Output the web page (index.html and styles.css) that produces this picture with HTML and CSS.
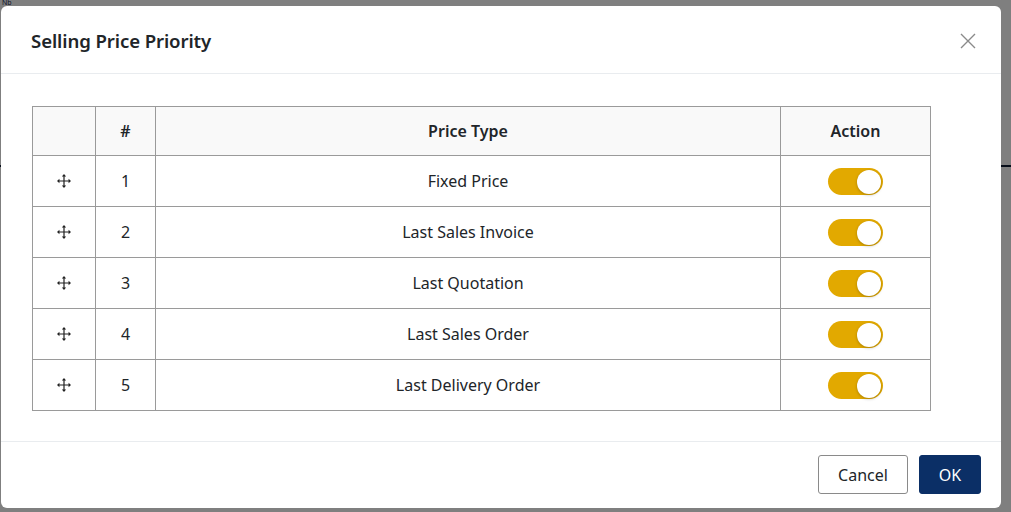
FILE: index.html
```html
<!DOCTYPE html>
<html lang="en">
<head>
<meta charset="utf-8">
<title>Selling Price Priority</title>
<link rel="stylesheet" href="styles.css">
</head>
<body>
<div class="page">
  <div class="page-title">Nb</div>
  <div class="page-rule"></div>
</div>
<div class="overlay">
  <div class="modal">
    <div class="modal-header">
      <h2 class="modal-title">Selling Price Priority</h2>
      <button class="close" aria-label="Close">
        <svg width="16" height="16" viewBox="0 0 16 16"><path d="M1 1 L15 15 M15 1 L1 15" stroke="#8a8a8a" stroke-width="1.4" fill="none"/></svg>
      </button>
    </div>
    <div class="modal-body">
      <table class="grid">
        <colgroup>
          <col class="c-drag"><col class="c-num"><col class="c-type"><col class="c-act">
        </colgroup>
        <thead>
          <tr><th></th><th>#</th><th>Price Type</th><th>Action</th></tr>
        </thead>
        <tbody>
          <tr><td><svg class="move" viewBox="0 0 15 15"><path d="M7.5 1.5v12M1.5 7.5h12" stroke="#222" stroke-width="1.3"/><path d="M7.5 0l-2.3 2.6h4.6zM7.5 15l-2.3-2.6h4.6zM0 7.5l2.6-2.3v4.6zM15 7.5l-2.6-2.3v4.6z" fill="#222"/></svg></td><td>1</td><td>Fixed Price</td><td><span class="toggle"><span class="knob"></span></span></td></tr>
          <tr><td><svg class="move" viewBox="0 0 15 15"><path d="M7.5 1.5v12M1.5 7.5h12" stroke="#222" stroke-width="1.3"/><path d="M7.5 0l-2.3 2.6h4.6zM7.5 15l-2.3-2.6h4.6zM0 7.5l2.6-2.3v4.6zM15 7.5l-2.6-2.3v4.6z" fill="#222"/></svg></td><td>2</td><td>Last Sales Invoice</td><td><span class="toggle"><span class="knob"></span></span></td></tr>
          <tr><td><svg class="move" viewBox="0 0 15 15"><path d="M7.5 1.5v12M1.5 7.5h12" stroke="#222" stroke-width="1.3"/><path d="M7.5 0l-2.3 2.6h4.6zM7.5 15l-2.3-2.6h4.6zM0 7.5l2.6-2.3v4.6zM15 7.5l-2.6-2.3v4.6z" fill="#222"/></svg></td><td>3</td><td>Last Quotation</td><td><span class="toggle"><span class="knob"></span></span></td></tr>
          <tr><td><svg class="move" viewBox="0 0 15 15"><path d="M7.5 1.5v12M1.5 7.5h12" stroke="#222" stroke-width="1.3"/><path d="M7.5 0l-2.3 2.6h4.6zM7.5 15l-2.3-2.6h4.6zM0 7.5l2.6-2.3v4.6zM15 7.5l-2.6-2.3v4.6z" fill="#222"/></svg></td><td>4</td><td>Last Sales Order</td><td><span class="toggle"><span class="knob"></span></span></td></tr>
          <tr><td><svg class="move" viewBox="0 0 15 15"><path d="M7.5 1.5v12M1.5 7.5h12" stroke="#222" stroke-width="1.3"/><path d="M7.5 0l-2.3 2.6h4.6zM7.5 15l-2.3-2.6h4.6zM0 7.5l2.6-2.3v4.6zM15 7.5l-2.6-2.3v4.6z" fill="#222"/></svg></td><td>5</td><td>Last Delivery Order</td><td><span class="toggle"><span class="knob"></span></span></td></tr>
        </tbody>
      </table>
    </div>
    <div class="modal-footer">
      <button class="btn btn-cancel">Cancel</button>
      <button class="btn btn-ok">OK</button>
    </div>
  </div>
</div>
</body>
</html>
```

FILE: styles.css
```css
html, body {
  margin: 0;
  padding: 0;
  height: 100%;
  overflow: hidden;
}
body {
  font-family: "Noto Sans", "Open Sans", "Liberation Sans", sans-serif;
  color: #212529;
  background: #fff;
}
.page {
  height: 100%;
}
.page-title {
  font-size: 7px;
  line-height: 6px;
  height: 6px;
  padding-left: 2px;
  color: #1a2a50;
}
.page-rule {
  margin-top: 159px;
  height: 2px;
  background: #0c1a33;
}
.overlay {
  position: absolute;
  inset: 0;
  background: rgba(0, 0, 0, 0.5);
}
.modal {
  margin: 6px 0 0 1px;
  width: 1000px;
  height: 502px;
  background: #fff;
  border-radius: 6px;
  display: flex;
  flex-direction: column;
  overflow: hidden;
}
.modal-header {
  height: 67px;
  border-bottom: 1px solid #e9ecef;
  display: flex;
  align-items: center;
  justify-content: space-between;
  padding: 0 25px 0 30px;
  box-sizing: content-box;
}
.modal-title {
  margin: 0 0 0 0;
  padding-top: 2px;
  font-size: 18.6px;
  font-weight: 600;
  color: #212529;
  letter-spacing: -0.1px;
}
.close {
  border: 0;
  background: none;
  padding: 0;
  width: 16px;
  height: 16px;
  margin-top: 2px;
  cursor: pointer;
}
.close svg { display: block; }
.modal-body {
  padding: 32px 31px 30px 31px;
  flex: 0 0 auto;
}
.grid {
  width: 898px;
  border-collapse: collapse;
  table-layout: fixed;
  font-size: 16px;
}
.c-drag { width: 63px; }
.c-num { width: 60px; }
.c-type { width: 625px; }
.c-act { width: 150px; }
.grid th, .grid td {
  border: 1px solid #9a9a9a;
  text-align: center;
  vertical-align: middle;
  padding: 0;
}
.grid th {
  height: 48px;
  background: #f9f9f9;
  font-weight: 600;
  color: #212529;
}
.grid td {
  height: 50px;
  color: #212529;
}
.move {
  width: 14px;
  height: 14px;
  display: block;
  margin: 0 auto;
}
.toggle {
  display: inline-block;
  vertical-align: middle;
  width: 55px;
  height: 27px;
  border-radius: 14px;
  background: #e2a900;
  position: relative;
  margin-top: 1px;
}
.knob {
  position: absolute;
  right: 2px;
  top: 1.5px;
  width: 24px;
  height: 24px;
  border-radius: 50%;
  background: #fff;
  box-shadow: 0 1px 3px rgba(0,0,0,0.25);
}
.modal-footer {
  border-top: 1px solid #e9ecef;
  display: flex;
  justify-content: flex-end;
  align-items: flex-start;
  gap: 11px;
  padding: 13px 20px 0 0;
}
.btn {
  height: 39px;
  font-family: inherit;
  font-size: 16px;
  border-radius: 3px;
  cursor: pointer;
  padding: 0;
}
.btn-cancel {
  width: 90px;
  background: #fff;
  border: 1px solid #8a8a8a;
  color: #212529;
}
.btn-ok {
  width: 62px;
  background: #0b2f66;
  border: 1px solid #0b2f66;
  color: #fff;
}
```
